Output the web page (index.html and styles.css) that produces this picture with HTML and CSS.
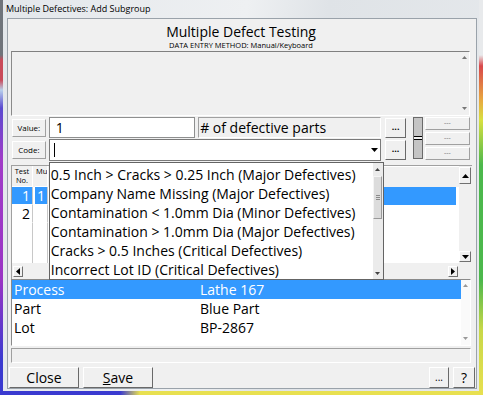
FILE: index.html
```html
<!DOCTYPE html>
<html lang="en">
<head>
    <meta charset="UTF-8">
    <title>Multiple Defectives: Add Subgroup</title>
    <link rel="stylesheet" href="styles.css">
</head>
<body>
    <div class="window">
        <div class="titlebar">Multiple Defectives: Add Subgroup</div>
        <div class="client">
            <div class="header">
                <div class="title">Multiple Defect Testing</div>
                <div class="subtitle">DATA ENTRY METHOD: Manual/Keyboard</div>
            </div>

            <div class="memo">
                <div class="memo-text"></div>
                <div class="flat-scroll">
                    <svg width="5" height="3" viewBox="0 0 5 3"><polygon points="0,3 5,3 2.5,0" fill="#777"/></svg>
                    <svg width="5" height="3" viewBox="0 0 5 3"><polygon points="0,0 5,0 2.5,3" fill="#777"/></svg>
                </div>
            </div>

            <div class="entry">
                <div class="fields">
                    <div class="field-row">
                        <div class="tag">Value:</div>
                        <div class="textbox">1</div>
                        <div class="unit"># of defective parts</div>
                        <div class="dots">...</div>
                    </div>
                    <div class="field-row code-row">
                        <div class="tag">Code:</div>
                        <div class="combo">
                            <span class="caret"></span>
                            <span class="combo-arrow">
                                <svg width="7" height="4" viewBox="0 0 7 4"><polygon points="0,0 7,0 3.5,4" fill="#000"/></svg>
                            </span>
                            <div class="dropdown">
                                <div class="options">
                                    <div class="option">0.5 Inch &gt; Cracks &gt; 0.25 Inch (Major Defectives)</div>
                                    <div class="option">Company Name Missing (Major Defectives)</div>
                                    <div class="option">Contamination &lt; 1.0mm Dia (Minor Defectives)</div>
                                    <div class="option">Contamination &gt; 1.0mm Dia (Major Defectives)</div>
                                    <div class="option">Cracks &gt; 0.5 Inches (Critical Defectives)</div>
                                    <div class="option">Incorrect Lot ID (Critical Defectives)</div>
                                </div>
                                <div class="list-scroll">
                                    <svg width="5" height="3" viewBox="0 0 5 3"><polygon points="0,3 5,3 2.5,0" fill="#444"/></svg>
                                    <div class="thumb"><span></span><span></span><span></span></div>
                                    <div class="spacer"></div>
                                    <svg width="5" height="3" viewBox="0 0 5 3"><polygon points="0,0 5,0 2.5,3" fill="#444"/></svg>
                                </div>
                            </div>
                        </div>
                        <div class="dots">...</div>
                    </div>
                </div>
                <div class="slider"><span></span></div>
                <div class="mini">
                    <div class="mini-box">---</div>
                    <div class="mini-box">---</div>
                    <div class="mini-box">---</div>
                </div>
            </div>

            <div class="grid">
                <div class="grid-body">
                    <div class="grid-row grid-head">
                        <div class="c1">Test<br>No.</div>
                        <div class="c2">Mu</div>
                        <div class="c3"></div>
                    </div>
                    <div class="grid-row selected">
                        <div class="c1">1</div>
                        <div class="c2">1</div>
                        <div class="c3"></div>
                    </div>
                    <div class="grid-row">
                        <div class="c1">2</div>
                        <div class="c2"></div>
                        <div class="c3"></div>
                    </div>
                    <div class="grid-fill">
                        <div class="c1"></div>
                        <div class="c2"></div>
                        <div class="c3"></div>
                    </div>
                </div>
                <div class="vscroll">
                    <div class="sbtn"><svg width="7" height="4" viewBox="0 0 7 4"><polygon points="0,4 7,4 3.5,0" fill="#000"/></svg></div>
                    <div class="spacer"></div>
                    <div class="sbtn"><svg width="7" height="4" viewBox="0 0 7 4"><polygon points="0,0 7,0 3.5,4" fill="#000"/></svg></div>
                </div>
                <div class="hscroll">
                    <div class="sbtn"><svg width="4" height="7" viewBox="0 0 4 7"><polygon points="4,0 4,7 0,3.5" fill="#000"/></svg></div>
                    <div class="spacer"></div>
                    <div class="sbtn"><svg width="4" height="7" viewBox="0 0 4 7"><polygon points="0,0 0,7 4,3.5" fill="#000"/></svg></div>
                </div>
                <div class="corner"></div>
            </div>

            <div class="props">
                <div class="prop-list">
                    <div class="prop selected"><span class="pname">Process</span><span>Lathe 167</span></div>
                    <div class="prop"><span class="pname">Part</span><span>Blue Part</span></div>
                    <div class="prop"><span class="pname">Lot</span><span>BP-2867</span></div>
                </div>
                <div class="flat-scroll light">
                    <svg width="5" height="3" viewBox="0 0 5 3"><polygon points="0,3 5,3 2.5,0" fill="#999"/></svg>
                    <svg width="5" height="3" viewBox="0 0 5 3"><polygon points="0,0 5,0 2.5,3" fill="#999"/></svg>
                </div>
            </div>

            <div class="status"></div>

            <div class="buttons">
                <div class="btn wide">Close</div>
                <div class="btn wide"><u>S</u>ave</div>
                <div class="grow"></div>
                <div class="btn small">...</div>
                <div class="btn small help">?</div>
            </div>
        </div>
    </div>
</body>
</html>
```

FILE: styles.css
```css
*{
    margin: 0;
    padding: 0;
    box-sizing: border-box;
}
body{
    width: 483px;
    height: 395px;
    overflow: hidden;
    font-family: "Open Sans", "Noto Sans", sans-serif;
    color: #000;
    background:
        linear-gradient(to bottom, #6f747b 0, #6f747b 55px, #c94a5a 60px, #c94a5a 80px, #b8d0ec 90px, #5a4ad0 108px, #a03cc8 160px, #9a34c4 280px, #3a3ad0 360px, #3a3ad0 395px) left top / 3px 100% no-repeat,
        linear-gradient(to bottom, #e8eaec 0, #e8eaec 55px, #d8474a 66px, #e8a840 100px, #d8e040 120px, #4cb84c 165px, #4cb84c 280px, #c8d848 330px, #e8e050 395px) right top / 4px 100% no-repeat,
        linear-gradient(to right, #3a3ad0 0, #3a3ad0 120px, #e8e050 140px, #e8e050 100%) left bottom / 100% 4px no-repeat,
        #dfe3e7;
}
.window{
    margin: 0 4px 0 3px;
    height: 391px;
    display: flex;
    flex-direction: column;
    background: linear-gradient(100deg, #e3e7eb 0%, #eef0f2 45%, #dfe3e7 60%, #e6e9ec 100%);
}
.titlebar{
    height: 18px;
    line-height: 18px;
    padding-left: 3px;
    font-size: 9px;
}
.client{
    flex: 1;
    margin: 0 2px 2px 4px;
    border: 1px solid #9aa2aa;
    background: #f0f0f0;
    display: flex;
    flex-direction: column;
}

/* header */
.header{
    height: 32px;
    margin: 0 5px 0 3px;
    padding-top: 5px;
    text-align: center;
}
.title{
    font-size: 14px;
    line-height: 15px;
}
.subtitle{
    margin-top: 2px;
    font-size: 7.5px;
    line-height: 8px;
}
.memo{
    height: 65px;
    margin: 0 6px 0 3px;
    border: 1px solid;
    border-color: #808080 #ffffff #ffffff #8a8a8a;
    display: flex;
}
.memo-text{
    flex: 1;
}
.flat-scroll{
    width: 9px;
    display: flex;
    flex-direction: column;
    justify-content: space-between;
    align-items: center;
    padding: 4px 0 5px;
}
.flat-scroll.light{
    background: #fafafa;
}

/* value / code entry */
.entry{
    display: flex;
    margin: 1px 0 0 4px;
    height: 44px;
}
.fields{
    width: 394px;
}
.field-row{
    display: flex;
    align-items: center;
    height: 21px;
    gap: 3px;
}
.code-row{
    height: 22px;
    margin-top: 1px;
}
.tag{
    width: 34px;
    height: 18px;
    line-height: 16px;
    font-size: 8px;
    text-align: center;
    border: 1px solid;
    border-color: #ffffff #a0a0a0 #a0a0a0 #ffffff;
}
.textbox{
    width: 148px;
    height: 21px;
    border: 1px solid #8e8f8f;
    background: #fff;
    font-size: 14px;
    line-height: 19px;
    padding-left: 6px;
}
.unit{
    width: 185px;
    height: 21px;
    border: 1px solid;
    border-color: #a0a0a0 #ffffff #ffffff #a0a0a0;
    font-size: 14px;
    line-height: 19px;
    padding-left: 1px;
}
.dots{
    width: 21px;
    height: 20px;
    margin-left: 1px;
    border: 1px solid;
    border-color: #ffffff #696969 #696969 #ffffff;
    font-size: 9px;
    font-weight: bold;
    text-align: center;
    line-height: 16px;
}
.combo{
    position: relative;
    width: 335px;
    height: 22px;
    border: 1px solid #7a7a7a;
    background: #fff;
}
.caret{
    position: absolute;
    left: 4px;
    top: 3px;
    width: 1px;
    height: 14px;
    background: #000;
}
.combo-arrow{
    position: absolute;
    right: 0;
    top: 0;
    width: 11px;
    height: 20px;
    display: flex;
    align-items: center;
    justify-content: center;
}
.dropdown{
    position: absolute;
    left: -1px;
    top: 22px;
    width: 335px;
    height: 118px;
    border: 1px solid #646464;
    background: #fff;
    display: flex;
    z-index: 2;
}
.options{
    flex: 1;
    padding-top: 2px;
    overflow: hidden;
}
.option{
    height: 19px;
    line-height: 19px;
    font-size: 14px;
    padding-left: 1px;
    white-space: nowrap;
}
.list-scroll{
    width: 10px;
    background: #ebebeb;
    display: flex;
    flex-direction: column;
    align-items: center;
    padding: 5px 0 4px;
}
.list-scroll .thumb{
    width: 9px;
    height: 43px;
    margin-top: 5px;
    border: 1px solid;
    border-color: #f4f4f4 #9a9a9a #9a9a9a #f4f4f4;
    background: #dcdcdc;
    display: flex;
    flex-direction: column;
    justify-content: center;
    align-items: center;
    gap: 1px;
}
.list-scroll .thumb span{
    width: 4px;
    height: 1px;
    background: #8a8a8a;
}
.spacer, .grow{
    flex: 1;
}
.slider{
    width: 10px;
    height: 42px;
    margin-left: 7px;
    border: 1px solid #6a6a6a;
    background: #c4c4c4;
    display: flex;
    align-items: center;
}
.slider span{
    width: 100%;
    height: 4px;
    border-top: 1px solid #000;
    border-bottom: 1px solid #000;
    background: #f0f0f0;
}
.mini{
    width: 45px;
    margin-left: 2px;
    display: flex;
    flex-direction: column;
    gap: 2px;
}
.mini-box{
    height: 13px;
    border: 1px solid;
    border-color: #ffffff #a0a0a0 #a0a0a0 #ffffff;
    font-size: 7px;
    line-height: 9px;
    text-align: center;
    color: #777;
}

/* grid */
.grid{
    display: grid;
    grid-template-columns: 1fr 13px;
    grid-template-rows: 97px 16px;
    height: 114px;
    margin: 4px 4px 0 3px;
    border-top: 1px solid #a0a0a0;
    border-left: 1px solid #a0a0a0;
}
.grid-body{
    display: flex;
    flex-direction: column;
    background: #fff;
    overflow: hidden;
}
.grid-row, .grid-fill{
    display: flex;
    height: 18px;
    gap: 2px;
}
.grid-fill{
    flex: 1;
}
.grid-row .c1, .grid-row .c2{
    border-bottom: 1px solid #fff;
}
.c1{
    width: 21px;
    text-align: right;
    padding-right: 2px;
    font-size: 14px;
    line-height: 17px;
    border-right: 1px solid #c8c8c8;
}
.c2{
    width: 13px;
    padding-left: 2px;
    font-size: 14px;
    line-height: 17px;
    border-right: 1px solid #c8c8c8;
}
.c3{
    flex: 1;
}
.grid-head{
    height: 21px;
    background: #f0f0f0;
}
.grid-head .c1{
    text-align: center;
    padding-right: 0;
    font-size: 7.5px;
    line-height: 9px;
    padding-top: 1px;
    border-right: 1px solid #fff;
}
.grid-head .c2{
    font-size: 7.5px;
    line-height: 9px;
    padding: 1px 0 0 1px;
    overflow: hidden;
    border-right: 1px solid #fff;
}
.grid-head .c3{
    border-top: 1px solid #fff;
}
.grid-row.selected > div{
    background: #3399ff;
    color: #fff;
}
.grid-row.selected .c3{
    margin-right: 3px;
}
.vscroll{
    display: flex;
    flex-direction: column;
    background: #f0f0f0;
    padding-top: 1px;
}
.hscroll{
    display: flex;
    align-items: center;
    background: #f0f0f0;
    padding-left: 1px;
    padding-right: 1px;
}
.sbtn{
    width: 12px;
    height: 17px;
    border: 1px solid;
    border-color: #ffffff #707070 #707070 #ffffff;
    background: #f0f0f0;
    display: flex;
    align-items: center;
    justify-content: center;
}
.vscroll .sbtn:last-child{
    height: 11px;
    margin-bottom: 1px;
}
.hscroll .sbtn{
    width: 10px;
    height: 11px;
}
.corner{
    background: #f0f0f0;
}

/* process list */
.props{
    height: 67px;
    margin: 0 5px 0 3px;
    border: 1px solid;
    border-color: #8a8a8a #ffffff #ffffff #8a8a8a;
    background: #fff;
    display: flex;
}
.prop-list{
    flex: 1;
}
.prop{
    display: flex;
    height: 19px;
    line-height: 19px;
    font-size: 14px;
    padding-left: 2px;
}
.prop.selected{
    background: #3399ff;
    color: #fff;
}
.pname{
    width: 186px;
}
.status{
    height: 15px;
    margin: 2px 5px 0 3px;
    border: 1px solid;
    border-color: #a0a0a0 #ffffff #ffffff #a0a0a0;
}

/* buttons */
.buttons{
    display: flex;
    gap: 4px;
    margin: 4px 1px 0 1px;
    height: 21px;
}
.btn{
    height: 21px;
    border: 1px solid;
    border-color: #ffffff #696969 #696969 #ffffff;
    background: #f0f0f0;
    text-align: center;
    font-size: 14px;
    line-height: 19px;
}
.btn.wide{
    width: 70px;
}
.btn.small{
    width: 20px;
    font-size: 10px;
}
.btn.help{
    width: 22px;
    font-size: 14px;
}
```
